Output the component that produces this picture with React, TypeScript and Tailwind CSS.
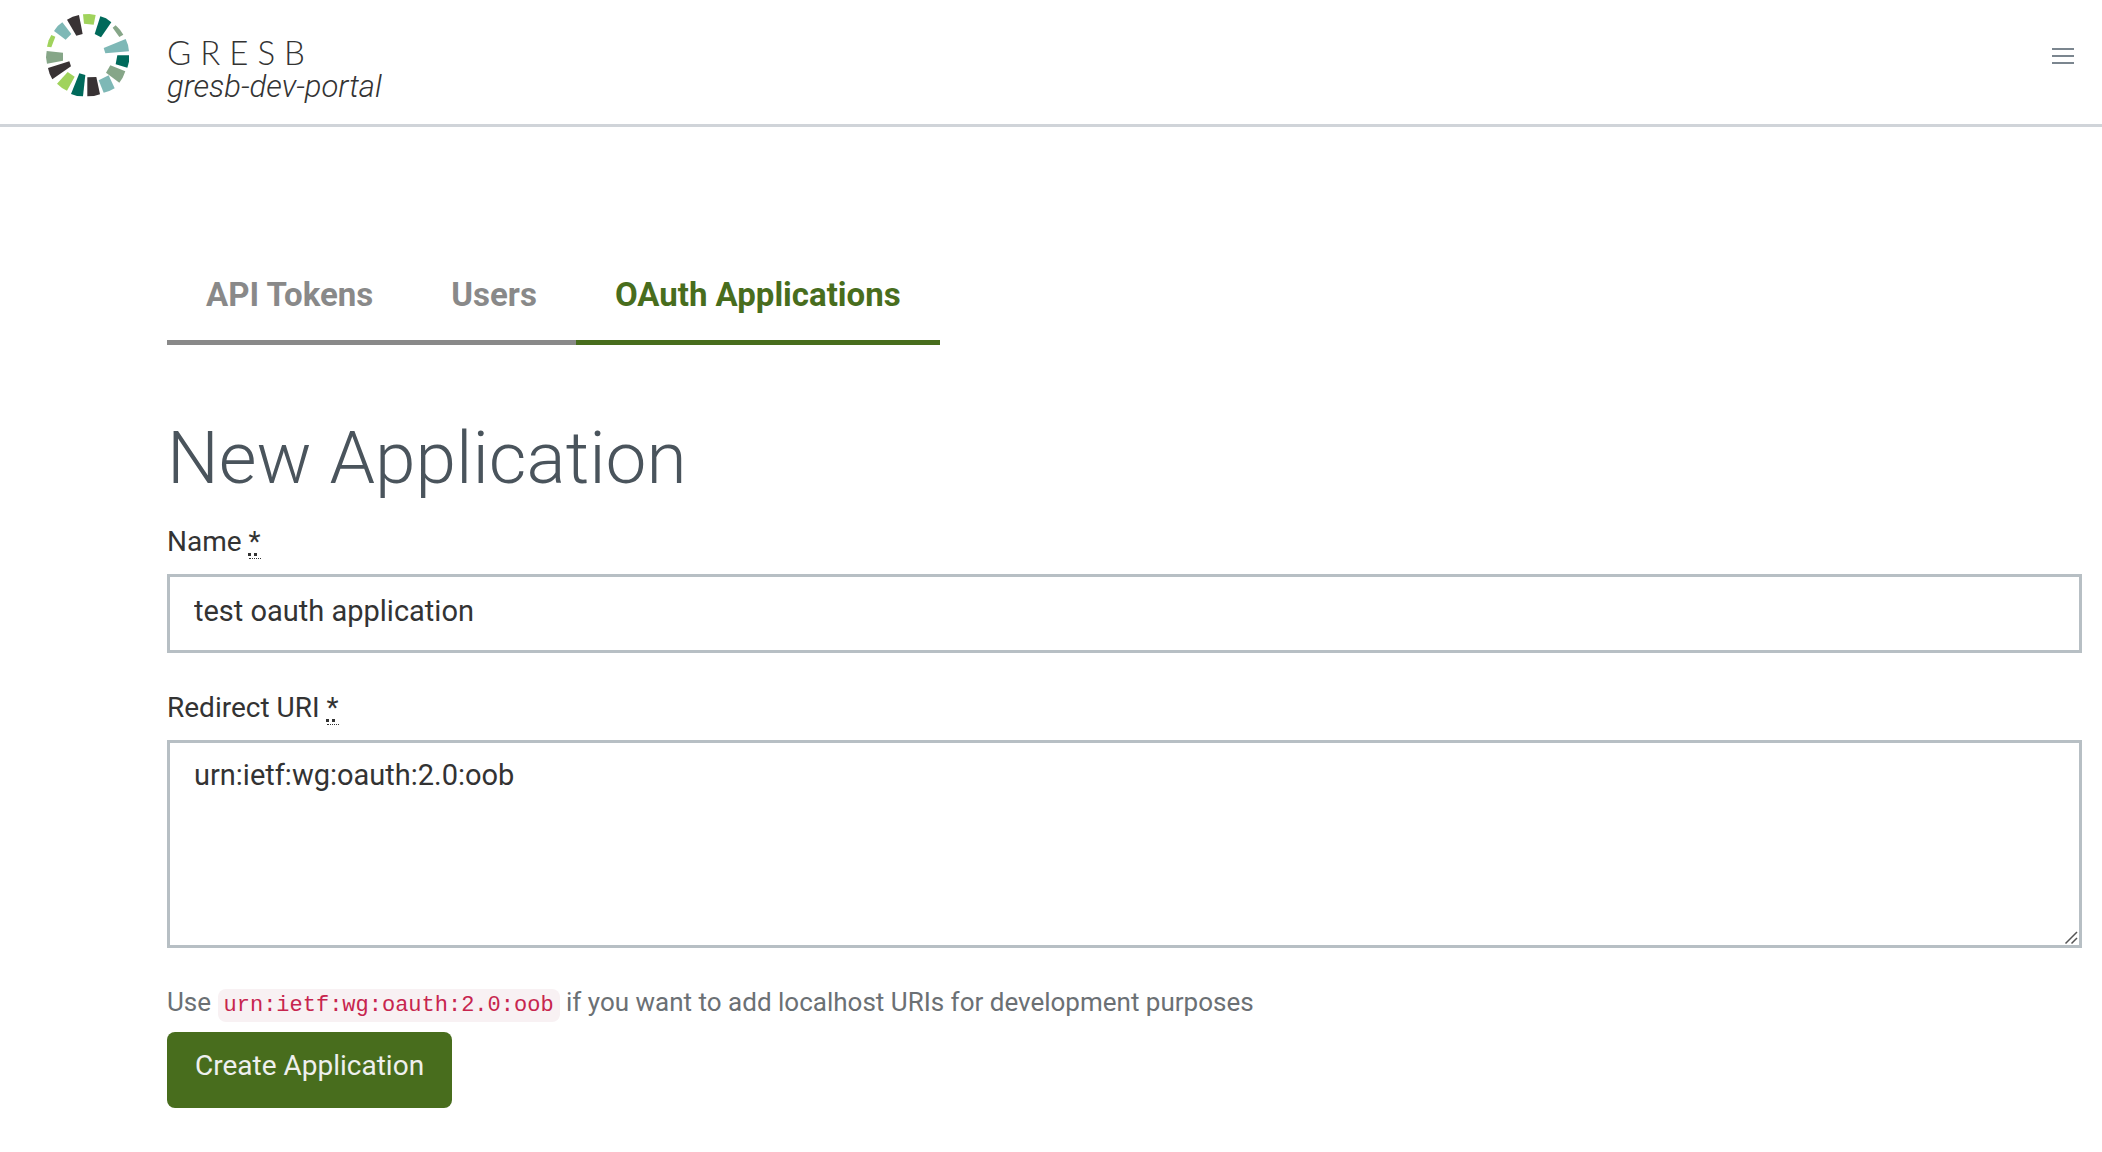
import React from "react";

const LIME = "#a0d35c";
const TEAL = "#006a5b";
const SAGE = "#86a688";
const AQUA = "#7eb8b6";
const DARK = "#383234";

const segments: [string, string][] = [
  ["159,42 178,41 197,44 191,73 162,70", LIME],
  ["211,48 228,54 244,66 213,111 194,101", TEAL],
  ["257,75 270,88 280,103 268,110 248,82", SAGE],
  ["287,116 294,134 297,153 226,159 221,143", AQUA],
  ["262,165 297,165 297,184 292,202 257,192", TEAL],
  ["241,195 286,213 278,232 268,247 228,217", SAGE],
  ["236,225 254,264 238,272 221,277 206,240", AQUA],
  ["172,231 199,230 210,282 192,287 172,288", DARK],
  ["148,219 166,224 159,288 141,287 123,281", TEAL],
  ["113,215 134,229 111,271 96,263 81,250", LIME],
  ["118,183 123,198 67,237 59,221 54,203", DARK],
  ["50,152 99,157 99,181 51,190 48,171", SAGE],
  ["64,104 76,109 64,141 51,139 56,120", LIME],
  ["97,66 124,101 107,118 72,92 83,77", AQUA],
  ["111,58 128,49 147,44 158,101 139,106", DARK],
];

function Logo() {
  return (
    <svg viewBox="48 41 249 249" className="size-[83px] shrink-0" aria-hidden="true">
      {segments.map(([points, fill]) => (
        <polygon key={points} points={points} fill={fill} />
      ))}
    </svg>
  );
}

function Required() {
  return (
    <abbr
      title="required"
      className="cursor-help border-b border-dotted border-[#333] underline decoration-dotted decoration-3 underline-offset-2"
    >
      *
    </abbr>
  );
}

const tabs = [
  { label: "API Tokens", active: false },
  { label: "Users", active: false },
  { label: "OAuth Applications", active: true },
];

const field =
  "block w-full border-3 border-[#b7bfc4] bg-white px-6 text-[29px] leading-10 text-[#333] outline-none";

export default function App() {
  return (
    <div className="min-h-screen bg-white font-['Roboto',sans-serif] text-[#333]">
      <header className="flex items-start border-b-3 border-[#d0d4d9] pt-3.5 pr-7 pb-5 pl-[46px]">
        <Logo />
        <div className="ml-[38px] pt-5">
          <div className="font-['Lato',sans-serif] text-[33px] leading-9 font-light tracking-[9px]">GRESB</div>
          <div className="text-[31px] leading-[34px] font-light italic">gresb-dev-portal</div>
        </div>
        <button type="button" aria-label="Open menu" className="mt-[34px] ml-auto flex w-[22px] flex-col gap-[5px]">
          <span className="h-0.5 w-full bg-[#7b868f]" />
          <span className="h-0.5 w-full bg-[#7b868f]" />
          <span className="h-0.5 w-full bg-[#7b868f]" />
        </button>
      </header>

      <main className="pt-[133px] pr-5 pb-10 pl-[167px]">
        <nav className="flex">
          {tabs.map((t) => (
            <a
              key={t.label}
              href="#"
              className={
                t.active
                  ? "border-b-5 border-[#486d1d] px-[39px] pt-3.5 pb-6 text-[33px] leading-[42px] font-bold text-[#486d1d]"
                  : "border-b-5 border-[#898989] px-[39px] pt-3.5 pb-6 text-[33px] leading-[42px] font-bold text-[#898989]"
              }
            >
              {t.label}
            </a>
          ))}
        </nav>

        <h1 className="mt-[69px] text-[73px] leading-[88px] font-light text-[#4a545c]">New Application</h1>

        <form onSubmit={(e) => e.preventDefault()}>
          <label htmlFor="name" className="mt-5 mb-3 block text-[28px] leading-10">
            Name <Required />
          </label>
          <input id="name" type="text" defaultValue="test oauth application" className={`${field} h-[79px] pb-1.5`} />

          <label htmlFor="redirect" className="mt-[35px] mb-3 block text-[28px] leading-10">
            Redirect URI <Required />
          </label>
          <div className="relative">
            <textarea
              id="redirect"
              defaultValue="urn:ietf:wg:oauth:2.0:oob"
              className={`${field} h-52 resize-y pt-3`}
            />
            <svg
              viewBox="0 0 16 16"
              className="pointer-events-none absolute right-[3px] bottom-[3px] size-4 bg-white"
              stroke="#555"
              strokeWidth="1.5"
              aria-hidden="true"
            >
              <path d="M2.5 14.5 14 3M8.500 14.500 14 9" />
            </svg>
          </div>

          <p className="mt-9 text-[26px] leading-9 text-[#6b7074]">
            Use{" "}
            <code className="rounded-lg bg-[#f8f1f3] px-1.5 py-1 font-['Liberation_Mono',monospace] text-[22px] text-[#c7254e]">
              urn:ietf:wg:oauth:2.0:oob
            </code>{" "}
            if you want to add localhost URIs for development purposes
          </p>

          <button
            type="submit"
            className="mt-2 block rounded-lg bg-[#486d1d] px-7 pt-3.5 pb-[22px] text-[28px] leading-10 text-[#eef0ee]"
          >
            Create Application
          </button>
        </form>
      </main>
    </div>
  );
}
